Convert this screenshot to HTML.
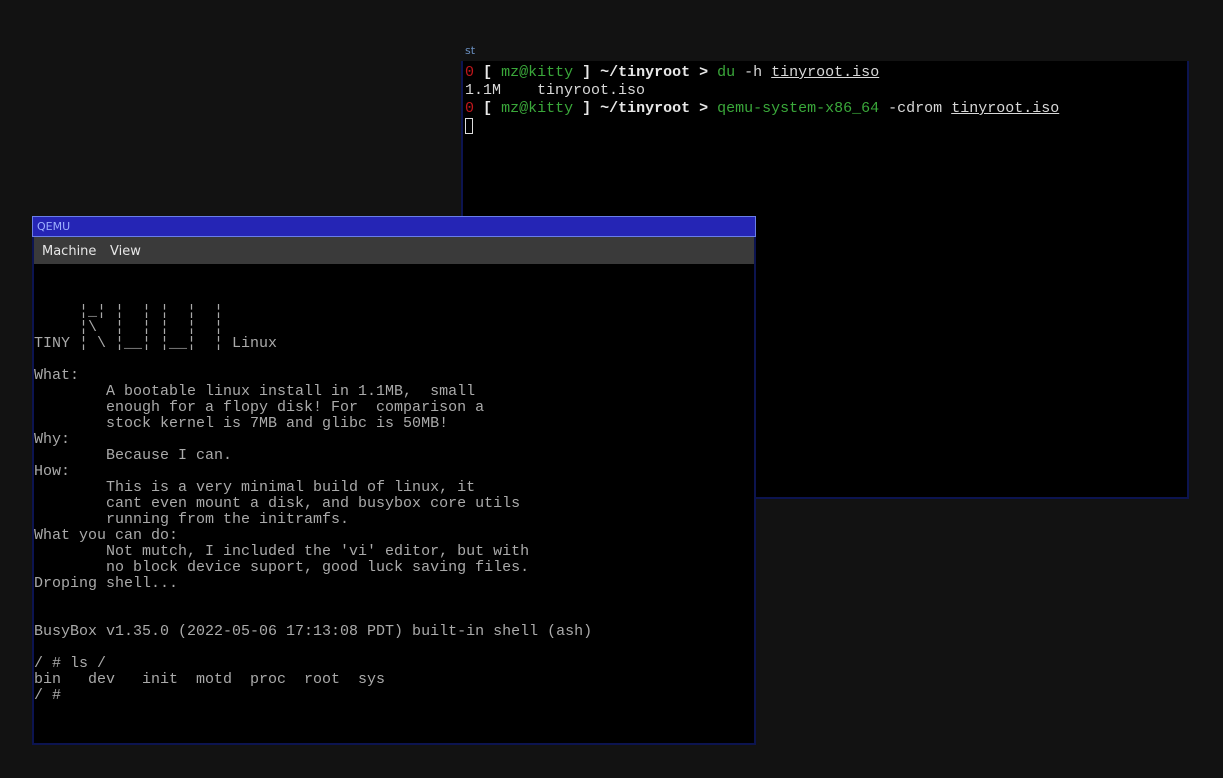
<!DOCTYPE html>
<html><head><meta charset="utf-8"><style>
body{margin:0;width:1223px;height:778px;background:#121212;position:relative;overflow:hidden;font-family:"Liberation Mono",monospace}
.st-title{position:absolute;left:465px;top:44px;font:11px "DejaVu Sans",sans-serif;color:#6a8fc0}
.term{position:absolute;left:461px;top:61px;width:724px;height:436px;background:#000;border:2px solid #0c1450;border-top:none}
.term pre{margin:0;padding:3px 0 0 2px;font:15px/18px "Liberation Mono",monospace;color:#d8d8d8}
.r{color:#c0161b}.g{color:#3aa83a}.b{font-weight:bold;color:#e8e8e8}.u{text-decoration:underline}
.cur{display:inline-block;width:8px;height:16px;border:1px solid #ddd;box-sizing:border-box;vertical-align:-3px}
.qemu{position:absolute;left:32px;top:216px;width:720px;height:527px;background:#000;border:2px solid #0c1450;border-top:none}
.qt{position:absolute;left:32px;top:216px;width:724px;height:21px;background:#2525b5;border:1px solid #6a7ee8;box-sizing:border-box;font:11px "DejaVu Sans",sans-serif;color:#9db0ff;padding:3px 4px}
.menu{position:absolute;left:34px;top:237px;width:720px;height:27px;background:#3a3a3a;font:13px "DejaVu Sans",sans-serif;color:#e6e6e6}
.menu span{position:absolute;top:7px}
.vga{position:absolute;left:34px;top:304px;margin:0;font:15px/16px "Liberation Mono",monospace;color:#aaa;letter-spacing:0}
</style></head><body>
<div class="st-title">st</div>
<div class="term"><pre><span class="r">0</span> <span class="b">[</span> <span class="g">mz@kitty</span> <span class="b">] ~/tinyroot &gt;</span> <span class="g">du</span> -h <span class="u">tinyroot.iso</span>
1.1M    tinyroot.iso
<span class="r">0</span> <span class="b">[</span> <span class="g">mz@kitty</span> <span class="b">] ~/tinyroot &gt;</span> <span class="g">qemu-system-x86_64</span> -cdrom <span class="u">tinyroot.iso</span>
<span class="cur"></span></pre></div>
<div class="qemu"></div>
<div class="qt">QEMU</div>
<div class="menu"><span style="left:8px">Machine</span><span style="left:76px">View</span></div>
<pre class="vga">     ¦_¦ ¦  ¦ ¦  ¦  ¦
     ¦\  ¦  ¦ ¦  ¦  ¦
TINY ¦ \ ¦__¦ ¦__¦  ¦ Linux

What:
        A bootable linux install in 1.1MB,  small
        enough for a flopy disk! For  comparison a
        stock kernel is 7MB and glibc is 50MB!
Why:
        Because I can.
How:
        This is a very minimal build of linux, it
        cant even mount a disk, and busybox core utils
        running from the initramfs.
What you can do:
        Not mutch, I included the 'vi' editor, but with
        no block device suport, good luck saving files.
Droping shell...


BusyBox v1.35.0 (2022-05-06 17:13:08 PDT) built-in shell (ash)

/ # ls /
bin   dev   init  motd  proc  root  sys
/ # </pre>
</body></html>
